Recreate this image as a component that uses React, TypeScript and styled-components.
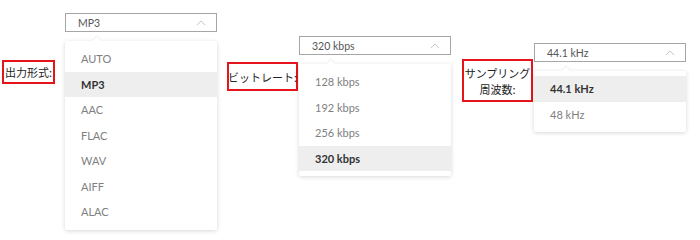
import styled, { createGlobalStyle } from 'styled-components';

const GlobalStyle = createGlobalStyle`
  body {
    margin: 0;
    background: #ffffff;
    font-family: Lato, "Noto Sans CJK JP", sans-serif;
  }
`;

interface Setting {
  label: string[];
  value: string;
  options: string[];
  top: number;
  labelTop: number;
  labelHeight: number;
  labelWidth: number;
  gap: number;
  left: number;
}

const settings: Setting[] = [
  {
    label: ['出力形式:'],
    value: 'MP3',
    options: ['AUTO', 'MP3', 'AAC', 'FLAC', 'WAV', 'AIFF', 'ALAC'],
    top: 13,
    labelTop: 47,
    labelHeight: 24,
    labelWidth: 53,
    gap: 10,
    left: 2,
  },
  {
    label: ['ビットレート:'],
    value: '320 kbps',
    options: ['128 kbps', '192 kbps', '256 kbps', '320 kbps'],
    top: 36,
    labelTop: 26,
    labelHeight: 29,
    labelWidth: 71,
    gap: 1,
    left: 10,
  },
  {
    label: ['サンプリング', '周波数:'],
    value: '44.1 kHz',
    options: ['44.1 kHz', '48 kHz'],
    top: 43,
    labelTop: 16,
    labelHeight: 43,
    labelWidth: 71,
    gap: 1,
    left: 11,
  },
];

const App = () => {
  return (
    <>
      <GlobalStyle />
      <Page>
        {settings.map((s) => (
          <Group key={s.value} $top={s.top} $left={s.left} $gap={s.gap}>
            <Label $top={s.labelTop} $height={s.labelHeight} $width={s.labelWidth}>
              {s.label.map((line) => (
                <span key={line}>{line}</span>
              ))}
            </Label>
            <SelectColumn>
              <SelectBox>
                <SelectValue>{s.value}</SelectValue>
                <Chevron viewBox="0 0 12 7">
                  <path d="M1 6 L6 1 L11 6" />
                </Chevron>
              </SelectBox>
              <Menu>
                <Notch />
                {s.options.map((opt) => (
                  <Item key={opt} $active={opt === s.value}>
                    {opt}
                  </Item>
                ))}
              </Menu>
            </SelectColumn>
          </Group>
        ))}
      </Page>
    </>
  );
};

const Page = styled.div`
  display: flex;
  align-items: flex-start;
  width: 700px;
  height: 238px;
  overflow: hidden;
`;

const Group = styled.div<{ $top: number; $left: number; $gap: number }>`
  display: flex;
  align-items: flex-start;
  gap: ${({ $gap }) => $gap}px;
  margin-top: ${({ $top }) => $top}px;
  margin-left: ${({ $left }) => $left}px;
`;

const Label = styled.div<{ $top: number; $height: number; $width: number }>`
  display: flex;
  flex-direction: column;
  align-items: center;
  justify-content: center;
  box-sizing: border-box;
  width: ${({ $width }) => $width}px;
  height: ${({ $height }) => $height}px;
  margin-top: ${({ $top }) => $top}px;
  border: 2px solid #e8141b;
  font-family: "Noto Sans CJK JP", sans-serif;
  font-size: 11px;
  font-weight: 400;
  line-height: 16px;
  color: #222222;
  white-space: nowrap;
`;

const SelectColumn = styled.div`
  display: flex;
  flex-direction: column;
  width: 152px;
`;

const SelectBox = styled.div`
  display: flex;
  align-items: center;
  justify-content: space-between;
  box-sizing: border-box;
  height: 19px;
  padding: 0 10px 0 12px;
  border: 1px solid #a6a6a6;
  background: #ffffff;
`;

const SelectValue = styled.span`
  font-size: 10.5px;
  color: #555555;
`;

const Chevron = styled.svg`
  width: 10px;
  height: 6px;
  fill: none;
  stroke: #c4c4c4;
  stroke-width: 1.2;
`;

const Menu = styled.div`
  position: relative;
  display: flex;
  flex-direction: column;
  margin-top: 9px;
  padding: 5px 0;
  background: #ffffff;
  border-radius: 2px;
  box-shadow: 0 1px 4px rgba(0, 0, 0, 0.16);
`;

const Notch = styled.div`
  position: absolute;
  top: -3px;
  left: 29px;
  width: 6px;
  height: 6px;
  background: #ffffff;
  transform: rotate(45deg);
  box-shadow: -1px -1px 1px rgba(0, 0, 0, 0.06);
`;

const Item = styled.div<{ $active: boolean }>`
  display: flex;
  align-items: center;
  height: 25.5px;
  padding-left: 16px;
  font-size: 11px;
  font-weight: ${({ $active }) => ($active ? 700 : 400)};
  color: ${({ $active }) => ($active ? '#333333' : '#808080')};
  background: ${({ $active }) => ($active ? '#eeeeee' : 'transparent')};
`;

export default App;
